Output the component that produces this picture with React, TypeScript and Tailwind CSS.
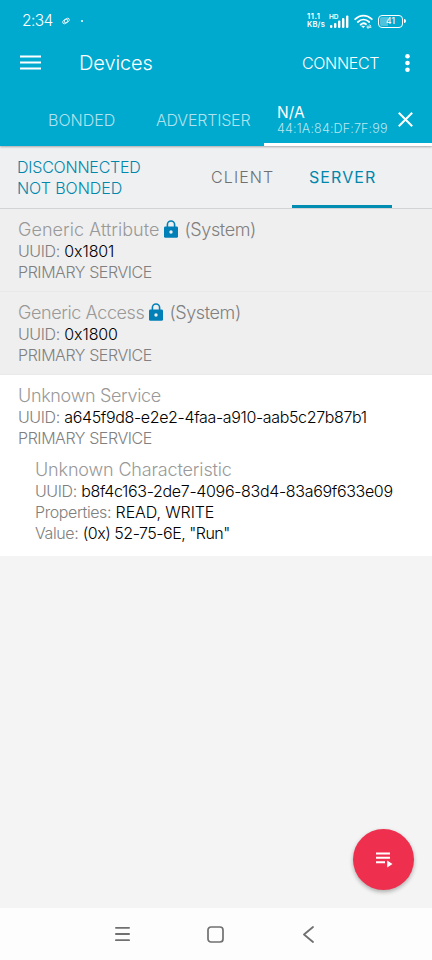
import type { ReactNode } from 'react';

function Lock() {
    return (
        <svg width="14" height="18" viewBox="0 0 14 18" className="shrink-0">
            <path d="M3.4 7V4.6a3.6 3.6 0 0 1 7.2 0V7" fill="none" stroke="#0080b7" strokeWidth="1.6" />
            <rect x="0" y="6.4" width="14" height="11.4" rx="1.4" fill="#0080b7" />
            <circle cx="7" cy="12" r="1.7" fill="#efefef" />
        </svg>
    );
}

function Line({ label, children, tracking = '' }: { label: string; children: ReactNode; tracking?: string }) {
    return (
        <p className="flex h-[21px] text-[16px] leading-[21px] text-[#808080]">
            <span className="mr-[4.5px] tracking-[-0.4px]">{label}</span>
            <span className={`font-[340] text-black ${tracking}`}>{children}</span>
        </p>
    );
}

function SystemService({ name, uuid, className, tracking }: { name: string; uuid: string; className: string; tracking: string }) {
    return (
        <div className={`border-b border-[#e9e9e9] bg-[#efefef] pl-[18px] ${className}`}>
            <div className="flex h-[22px] items-center text-[18px] leading-[22px] text-[#999999]">
                <span className={tracking}>{name}</span>
                <span className="mb-[3px] ml-[5px] mr-[6px] flex"><Lock /></span>
                <span className="tracking-[-0.4px] text-[#808080]">(System)</span>
            </div>
            <Line label="UUID:" tracking="tracking-[-0.1px]">{uuid}</Line>
            <p className="h-[21px] text-[16px] leading-[21px] tracking-[-0.42px] text-[#808080]">PRIMARY SERVICE</p>
        </div>
    );
}

function StatusBar() {
    return (
        <div className="flex h-[42px] items-center pl-[22px] pr-[26px]">
            <span className="w-[31px] text-[15.5px] font-[350] leading-none tracking-[-0.6px]">2:34</span>
            <svg width="8" height="8" viewBox="0 0 8 8" className="ml-[9px]" fill="none" stroke="white" strokeWidth="0.8">
                <ellipse cx="3.2" cy="4.4" rx="2.9" ry="1.8" transform="rotate(-40 3.2 4.4)" />
                <ellipse cx="4.8" cy="3.6" rx="2.9" ry="1.8" transform="rotate(-40 4.8 3.6)" />
            </svg>
            <span className="ml-[11px] size-[2px] rounded-full bg-white" />
            <div className="ml-auto w-[20px] text-[7.5px] font-semibold leading-[8px]">
                <p className="tracking-[0.6px]">11.1</p>
                <p className="tracking-[0.2px]">KB/s</p>
            </div>
            <svg width="21" height="15" viewBox="0 0 21 15" className="ml-[2px]" fill="white">
                <text x="0" y="5.3" fontSize="6.5" fontWeight="600">HD</text>
                <rect x="1" y="11" width="2.4" height="3" rx="1" />
                <rect x="5" y="9" width="2.4" height="5" rx="1" />
                <rect x="9" y="6.5" width="2.4" height="7.5" rx="1" />
                <rect x="13" y="4" width="2.4" height="10" rx="1" />
                <rect x="17" y="1.5" width="2.4" height="12.5" rx="1" />
            </svg>
            <svg width="19" height="15" viewBox="0 0 19 15" className="ml-[4px]" fill="none" stroke="white" strokeWidth="1.8" strokeLinecap="round">
                <path d="M1.2 5.2C6 .4 13 .4 17.8 5.2" />
                <path d="M3.8 8C7.2 4.8 11.8 4.8 15.2 8" />
                <path d="M6.6 10.6c1.7-1.5 4.1-1.5 5.4-.4" />
                <path d="M8 12.4l1.4 1.2.8-.8z" fill="white" strokeWidth="1" />
                <path d="M13 12.2h4l-1.3-1.4M17 13.4h-4l1.3 1.4" strokeWidth="0.8" />
            </svg>
            <div className="ml-[5px] flex items-center">
                <div className="flex h-[13px] w-[25px] items-center justify-center rounded-[4px] border border-white p-px">
                    <span className="flex h-full w-full items-center justify-center rounded-[2px] bg-linear-to-r from-[#4fc2dd] from-40% to-transparent to-40% text-[8.5px] font-medium leading-none">
                        41
                    </span>
                </div>
                <span className="ml-px h-[4px] w-[2px] rounded-r bg-white" />
            </div>
        </div>
    );
}

export default function App() {
    return (
        <div className="flex h-[960px] w-[432px] flex-col overflow-hidden whitespace-nowrap bg-[#f4f4f4] font-['Inter',sans-serif] font-light">
            <header className="z-10 h-[146px] shrink-0 bg-[#00a9ce] font-normal text-white shadow-[0_1px_2px_rgba(0,0,0,0.3)]">
                <StatusBar />
                <div className="flex h-[42px] items-center pl-[20px] pr-[22px]">
                    <svg width="21" height="15" viewBox="0 0 21 15" fill="white" className="-mt-[2px]">
                        <path d="M0 .5h21v2H0zM0 6.5h21v2H0zM0 12.5h21v2H0z" />
                    </svg>
                    <h1 className="ml-[38px] text-[20px] font-[350] leading-none tracking-[-0.1px]">Devices</h1>
                    <button className="ml-auto text-[16px] font-[350] leading-none tracking-[-0.35px]">CONNECT</button>
                    <svg width="5" height="18" viewBox="0 0 5 18" fill="white" className="ml-[26px]">
                        <circle cx="2.5" cy="2.3" r="2.3" />
                        <circle cx="2.5" cy="9" r="2.3" />
                        <circle cx="2.5" cy="15.7" r="2.3" />
                    </svg>
                </div>
                <nav className="flex h-[62px] pt-[10px]">
                    <div className="flex w-[132px] items-center pl-[48px] text-[16px] font-light text-[#b0e3ef]">BONDED</div>
                    <div className="flex w-[132px] items-center pl-[24px] text-[16px] font-light tracking-[-0.2px] text-[#b0e3ef]">ADVERTISER</div>
                    <div className="flex w-[168px] items-center border-b-[3px] border-white pl-[13px] pt-[2px]">
                        <div className="w-[121px]">
                            <p className="text-[15.5px] font-[370] leading-[17px]">N/A</p>
                            <p className="text-[12.5px] font-light leading-[15px] tracking-[0.16px] text-[#b9e7f1]">44:1A:84:DF:7F:99</p>
                        </div>
                        <svg width="15" height="15" viewBox="0 0 15 15" stroke="white" strokeWidth="2">
                            <path d="M.8.8l13.4 13.4M14.2.8.8 14.2" />
                        </svg>
                    </div>
                </nav>
            </header>

            <section className="flex h-[63px] shrink-0 border-b border-[#d2d3d5] bg-[#eff0f2] shadow-[0_1px_2px_rgba(0,0,0,0.12)]">
                <div className="w-[194px] pl-[17px] pt-[11px] text-[16px] font-[350] leading-[21px] text-[#0087ab]">
                    <p className="tracking-[-0.22px]">DISCONNECTED</p>
                    <p className="tracking-[-0.05px]">NOT BONDED</p>
                </div>
                <div className="flex w-[98px] items-center pl-[17px] text-[16px] tracking-[1.1px] text-[#707070]">CLIENT</div>
                <div className="flex w-[100px] items-center border-b-[3px] border-[#008db1] pl-[17px] pt-[3px] text-[16px] font-normal tracking-[1.1px] text-[#0087ab]">
                    SERVER
                </div>
            </section>

            <main className="flex-1">
                <SystemService name="Generic Attribute" uuid="0x1801" className="h-[83px] pt-[10px]" tracking="tracking-[0.03px]" />
                <SystemService name="Generic Access" uuid="0x1800" className="h-[83px] pt-[10px]" tracking="tracking-[-0.4px]" />
                <div className="h-[181px] bg-white pl-[18px] pt-[10px]">
                    <p className="h-[22px] text-[18px] leading-[22px] tracking-[-0.33px] text-[#999999]">Unknown Service</p>
                    <Line label="UUID:" tracking="tracking-[-0.36px]">a645f9d8-e2e2-4faa-a910-aab5c27b87b1</Line>
                    <p className="h-[21px] text-[16px] leading-[21px] tracking-[-0.42px] text-[#808080]">PRIMARY SERVICE</p>
                    <div className="pl-[17px] pt-[10px]">
                        <p className="h-[22px] text-[18px] leading-[22px] tracking-[-0.15px] text-[#999999]">Unknown Characteristic</p>
                        <Line label="UUID:" tracking="tracking-[-0.33px]">b8f4c163-2de7-4096-83d4-83a69f633e09</Line>
                        <Line label="Properties:" tracking="tracking-[-0.1px]">READ, WRITE</Line>
                        <Line label="Value:" tracking="tracking-[-0.5px]">(0x) 52-75-6E, "Run"</Line>
                    </div>
                </div>
            </main>

            <div className="flex h-[79px] shrink-0 justify-end pr-[18px]">
                <button className="flex size-[61px] items-center justify-center rounded-full bg-[#ee2f4e] shadow-[0_2px_4px_rgba(0,0,0,0.3)]">
                    <svg width="17" height="17" viewBox="0 0 17 17" fill="white" className="ml-px">
                        <path d="M0 1.5h14v2H0zM0 5.8h14v2H0zM0 10.2h9v2H0zM11.2 9.5v7l5.3-3.5z" />
                    </svg>
                </button>
            </div>

            <footer className="flex h-[52px] shrink-0 items-center bg-[#fdfdfd] pl-[115px]">
                <svg width="15" height="16" viewBox="0 0 15 16" stroke="#707070" strokeWidth="1.8" strokeLinecap="round">
                    <path d="M.9 1.8h13.2M.9 8h13.2M.9 14.2h13.2" />
                </svg>
                <svg width="17" height="17" viewBox="0 0 17 17" fill="none" stroke="#707070" strokeWidth="1.7" className="ml-[77px]">
                    <rect x="1" y="1" width="15" height="15" rx="3" />
                </svg>
                <svg width="11" height="17" viewBox="0 0 11 17" fill="none" stroke="#707070" strokeWidth="1.8" strokeLinecap="round" strokeLinejoin="round" className="ml-[79px]">
                    <path d="M10 1 1 8.5 10 16" />
                </svg>
            </footer>
        </div>
    );
}
